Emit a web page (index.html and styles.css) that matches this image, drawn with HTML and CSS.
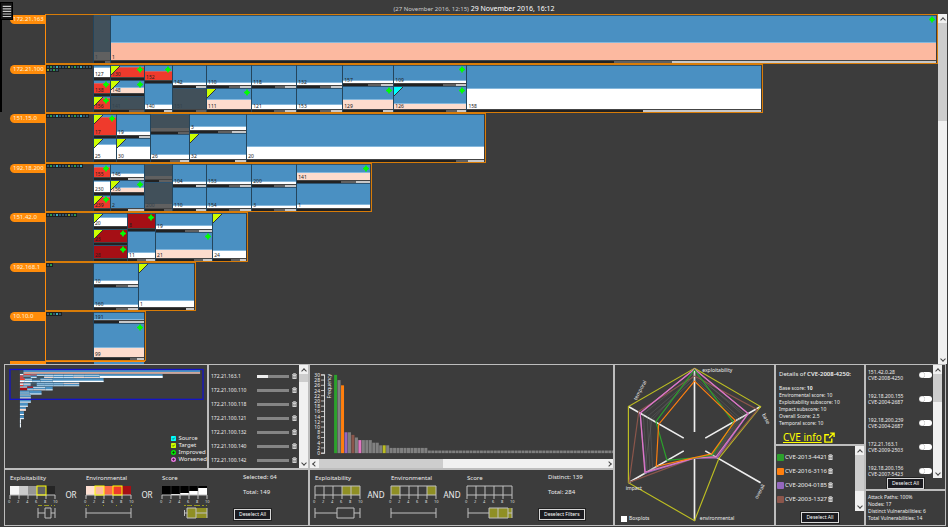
FILE: index.html
```html
<!DOCTYPE html>
<html lang="en">
<head>
<meta charset="utf-8">
<title>Vulnerability overview</title>
<link rel="stylesheet" href="styles.css">
</head>
<body>
<button class="menu" type="button" aria-label="Menu"><svg viewBox="0 0 13 18"><path d="M2 3.5h10M2 6.500h10M2 9.500h10M2 12.500h10M2 15.500h10" stroke="#ccc" stroke-width="1.300"/></svg></button>
<div class="drawer-edge"></div>
<header class="clock"><span class="since">(27 November 2016, 12:15)</span> 29 November 2016, 16:12</header>

<main class="map">
  <div class="subnets" id="subnets"></div>
  <div class="scroll scroll-v"><i class="up"></i><b class="thumb thumb-map"></b><i class="down"></i></div>
</main>

<section class="dock">
  <div class="col">
    <div class="split">
      <div class="panel overview">
        <svg id="overview" viewBox="-1 0 203 101"></svg>
        <ul class="legend">
          <li><svg viewBox="0 0 6 6"><rect width="6" height="6" rx="1" fill="#0ff"/><path d="M1.500 3l1 1 2-2" stroke="#244" fill="none"/></svg>Source</li>
          <li><svg viewBox="0 0 6 6"><rect width="6" height="6" rx="1" fill="#cf0"/><path d="M1.500 3l1 1 2-2" stroke="#440" fill="none"/></svg>Target</li>
          <li><svg viewBox="0 0 6 6"><circle cx="3" cy="3" r="3" fill="#0e0"/><path d="M1.500 3h3M3 1.500v3" stroke="#131"/></svg>Improved</li>
          <li><svg viewBox="0 0 6 6"><circle cx="3" cy="3" r="3" fill="#e377dd"/><path d="M1.500 3h3M3 1.500v3" stroke="#414"/></svg>Worsened</li>
        </ul>
      </div>
      <div class="panel hosts">
        <ul class="host-list" id="hosts"></ul>
        <div class="scroll scroll-v"><i class="up"></i><b class="thumb thumb-hosts"></b><i class="down"></i></div>
      </div>
    </div>
    <div class="panel filters">
      <figure><figcaption>Exploitability</figcaption>
        <svg viewBox="0 0 52 42">
          <g><rect x="3" width="9" height="9" y="2" fill="#f7f7f7"/><rect x="12" y="2" width="9" height="9" fill="#ccc"/><rect x="21" y="2" width="9" height="9" fill="#969696"/><rect x="30" y="2" width="9" height="9" fill="#636363"/><rect x="39" y="2" width="9" height="9" fill="#252525"/></g>
          <path class="axis" d="M3 11h45M3 11v4M12 11v4M21 11v4M30 11v4M39 11v4M48 11v4"/>
          <rect class="pick" x="30" y="2" width="9" height="9"/>
          <g class="tick"><text x="1" y="19">0</text><text x="10" y="19">2</text><text x="19" y="19">4</text><text x="28" y="19">6</text><text x="37" y="19">8</text><text x="46" y="19">10</text></g>
          <path class="dots" d="M31 21.500h4M37 21.500h5M44 21.500h1M47 21.500h1"/>
          <path class="axis" d="M31 24v10M31 29h7M44 29h4M48 24v10M38 24h6v10h-6z"/>
        </svg></figure>
      <span class="op">OR</span>
      <figure><figcaption>Environmental</figcaption>
        <svg viewBox="0 0 52 42">
          <g><rect x="3" y="2" width="9" height="9" fill="#fee0d2"/><rect x="12" y="2" width="9" height="9" fill="#fcbba1"/><rect x="21" y="2" width="9" height="9" fill="#fb6a4a"/><rect x="30" y="2" width="9" height="9" fill="#ef3b2c"/><rect x="39" y="2" width="9" height="9" fill="#a50f15"/></g>
          <path class="axis" d="M3 11h45M3 11v4M12 11v4M21 11v4M30 11v4M39 11v4M48 11v4"/>
          <rect class="pick" x="12" y="2" width="9" height="9"/><rect class="pick" x="30" y="2" width="9" height="9"/>
          <g class="tick"><text x="1" y="19">0</text><text x="10" y="19">2</text><text x="19" y="19">4</text><text x="28" y="19">6</text><text x="37" y="19">8</text><text x="46" y="19">10</text></g>
          <path class="dots" d="M3 21.500h1M5 21.500h1M20 21.500h1M33 21.500h1M48 21.500h1"/>
          <path class="axis" d="M3 24v10M3 29h45M48 24v10"/>
        </svg></figure>
      <span class="op">OR</span>
      <figure><figcaption>Score</figcaption>
        <svg viewBox="0 0 52 42">
          <rect x="3" y="2" width="45" height="9" fill="#000"/>
          <path fill="#fff" d="M12 11v-1h9v-1h9v-2h9v-3h9v7z"/>
          <path stroke="#555" stroke-width=".5" d="M12 2v9M21 2v9M30 2v9M39 2v9"/>
          <path class="axis" d="M3 11h45M3 11v4M12 11v4M21 11v4M30 11v4M39 11v4M48 11v4"/>
          <g class="tick"><text x="1" y="19">0</text><text x="10" y="19">2</text><text x="19" y="19">4</text><text x="28" y="19">6</text><text x="37" y="19">8</text><text x="46" y="19">10</text></g>
          <path class="dots" d="M25 21.500h2M28 21.500h5M35 21.500h6M43 21.500h2M47 21.500h1"/>
          <rect x="28" y="24" width="20" height="10" fill="#8f8f24"/>
          <path class="axis" d="M25.500 26v6M25.500 29h3M28 24h9v10h-9zM37 29h11M48 24v10"/>
        </svg></figure>
      <div class="summary"><p>Selected: 64</p><p>Total: 149</p><button class="btn" type="button">Deselect All</button></div>
    </div>
  </div>

  <div class="col">
    <div class="panel histogram">
      <svg id="histogram" viewBox="0 0 302 93"></svg>
      <div class="scroll scroll-h"><i class="left"></i><b class="thumb thumb-hist"></b><i class="right"></i></div>
    </div>
    <div class="panel filters">
      <figure><figcaption>Exploitability</figcaption>
        <svg viewBox="0 0 52 42">
          <rect x="30" y="2" width="18" height="9" fill="#8f8f24"/>
          <path class="axis" d="M3 2h45v9h-45zM3 11v4M12 2v13M21 2v13M30 2v13M39 2v13M48 11v4"/>
          <g class="tick"><text x="1" y="19">0</text><text x="10" y="19">2</text><text x="19" y="19">4</text><text x="28" y="19">6</text><text x="37" y="19">8</text><text x="46" y="19">10</text></g>
          <path class="axis" d="M3 24v10M3 29h22M42 29h6M48 24v10M25 24h17v10h-17z"/>
        </svg></figure>
      <span class="op">AND</span>
      <figure><figcaption>Environmental</figcaption>
        <svg viewBox="0 0 52 42">
          <path fill="#8f8f24" d="M3 2h9v9h-9zM39 2h9v9h-9z"/>
          <path class="axis" d="M3 2h45v9h-45zM3 11v4M12 2v13M21 2v13M30 2v13M39 2v13M48 11v4"/>
          <g class="tick"><text x="1" y="19">0</text><text x="10" y="19">2</text><text x="19" y="19">4</text><text x="28" y="19">6</text><text x="37" y="19">8</text><text x="46" y="19">10</text></g>
          <path class="axis" d="M3 24v10M3 29h45M48 24v10"/>
        </svg></figure>
      <span class="op">AND</span>
      <figure><figcaption>Score</figcaption>
        <svg viewBox="0 0 52 42">
          <path class="axis" d="M3 2h45v9h-45zM3 11v4M12 2v13M21 2v13M30 2v13M39 2v13M48 11v4"/>
          <g class="tick"><text x="1" y="19">0</text><text x="10" y="19">2</text><text x="19" y="19">4</text><text x="28" y="19">6</text><text x="37" y="19">8</text><text x="46" y="19">10</text></g>
          <rect x="25" y="24" width="23" height="10" fill="#8f8f24"/>
          <path class="axis" d="M4 24v10M4 29h21M25 24h19v10h-19zM34 24v10M44 29h4M48 24v10"/>
        </svg></figure>
      <div class="summary"><p>Distinct: 139</p><p>Total: 284</p><button class="btn" type="button">Deselect Filters</button></div>
    </div>
  </div>

  <div class="panel radar">
    <svg viewBox="12 12 474 474">
      <g fill="none">
        <g stroke="#eee" stroke-width="5"><path d="M249 22V212M446 136L281 230M446 363L281 268M249 476V287M52 363L217 268M52 136L217 230"/></g>
        <g stroke="#777" stroke-width="1.500" opacity=".7">
          <path d="M249 36L395 162L308 284L249 289L108 328L96 158Z"/><path d="M249 46L384 170L306 284L249 289L116 324L108 166Z"/>
          <path d="M249 54L378 174L304 282L249 289L124 320L116 172Z"/><path d="M249 40L402 160L310 285L249 289L98 336L122 176Z"/>
        </g>
        <g stroke-width="3.500">
          <path stroke="#bcbd22" d="M249 22L446 136L322 290L249 476L52 363L52 136Z"/>
          <path stroke="#8c564b" d="M249 45L437 145L318 288L249 289L54 362L83 150Z"/>
          <path stroke="#9467bd" d="M249 25L409 157L316 289L249 290L103 334L87 155Z"/>
          <path stroke="#e377c2" d="M249 24L409 157L313 286L249 289L101 332L87 155Z"/>
          <path stroke="#2ca02c" d="M249 26L365 183L303 280L249 289L167 296L134 181Z"/>
          <path stroke="#ff7f0e" d="M249 60L371 178L300 277L249 288L135 314L142 189Z"/>
        </g>
      </g>
      <g class="radar-text">
        <text x="272" y="32">exploitability</text>
        <text transform="translate(76 118) rotate(-62)">temporal</text>
        <text transform="translate(450 160) rotate(62)">base</text>
        <text transform="translate(437 412) rotate(-62)">overall</text>
        <text x="44" y="384">impact</text>
        <text x="265" y="475">environmental</text>
      </g>
    </svg>
    <label class="boxplots"><input type="checkbox">Boxplots</label>
  </div>

  <div class="col detail-col">
    <div class="panel details">
      <h2>Details of <strong>CVE-2008-4250:</strong></h2>
      <p>Base score: <strong>10</strong></p>
      <p>Enviromental score: 10</p>
      <p>Exploitability subscore: 10</p>
      <p>Impact subscore: 10</p>
      <p>Overall Score: 2.5</p>
      <p>Temporal score: 10</p>
      <a class="info" href="#cve">CVE info <svg viewBox="0 0 12 12"><path d="M8.500 7v4h-7.500v-8h4.500M6.800 1.200h4.200v4.200M11 1L5.500 6.600" fill="none" stroke="#ff0" stroke-width="1.500"/></svg></a>
    </div>
    <div class="panel cves">
      <div class="cve-scroll"><ul class="cve-list" id="cves"></ul>
      <div class="scroll scroll-v"><i class="up"></i><b class="thumb thumb-cves"></b><i class="down"></i></div></div>
      <button class="btn" type="button">Deselect All</button>
    </div>
  </div>

  <div class="col path-col">
    <div class="panel paths">
      <div class="path-scroll"><ul class="path-list" id="paths"></ul>
      <div class="scroll scroll-v"><i class="up"></i><b class="thumb thumb-paths"></b><i class="down"></i></div></div>
      <button class="btn" type="button">Deselect All</button>
    </div>
    <div class="panel stats"><p>Attack Paths: 100%</p><p>Nodes: 17</p><p>Distinct Vulnerabilities: 6</p><p>Total Vulnerabilities: 14</p></div>
  </div>
</section>
<script src="app.js"></script>
</body>
</html>
```
FILE: styles.css
```css
* { box-sizing: border-box; }
html, body { height: 100%; }
body {
  margin: 0;
  background: #3c3c3c;
  color: #eee;
  font: 5px/7px "Noto Sans", "Open Sans", sans-serif;
  display: grid;
  grid-template-rows: 14px minmax(0, 1fr) 163px;
  overflow: hidden;
}
ul, p, h2, figure { margin: 0; padding: 0; list-style: none; }
svg { display: block; }

.menu { position: absolute; left: 0; top: 2px; width: 13px; height: 18px; padding: 0; border: 1px solid #000; background: #151515; z-index: 2; }
.menu svg { width: 11px; height: 16px; }
.drawer-edge { position: absolute; left: 0; top: 20px; width: 2px; height: 92px; background: #000; }
.clock { text-align: center; font-size: 7px; line-height: 17px; color: #fff; }
.since { font-size: 6px; color: #ccc; }

/* subnet map */
.map { display: flex; min-height: 0; }
.subnets { flex: 1; min-width: 0; display: grid; grid-template-rows: repeat(7, minmax(0, 1fr)) 3px; overflow: hidden; }
.subnet { display: flex; min-height: 0; min-width: 0; }
.tag { flex: 0 0 45px; padding-left: 10px; }
.tag span { display: block; margin-top: 1px; padding-left: 3px; height: 9px; font-size: 6px; line-height: 9px; border-radius: 5px 0 0 5px; background: #ff8c0a; color: #fff0d8; }
.track { flex: 1; min-width: 0; display: flex; }
.frame { display: flex; min-width: 0; border: 1px solid #d87c08; border-left-color: #ff8c0a; padding-right: 1px; }
.dots-box { flex: 0 0 47px; display: flex; flex-wrap: wrap; align-content: flex-start; gap: 1px; padding: 1px 0 0 1px; }
.dot { width: 2px; height: 2px; background: #36586c; outline: 1px solid #1c2022; }
.dot.y { background: #8a9a2a; }
.dot.g { background: #2c9a4a; }
.dot.c { background: #3aa8b8; }
.cells { flex: 1; display: flex; min-width: 0; }
.stack { display: flex; flex-direction: column; min-width: 0; border-left: 1px solid #24455c; }
.cell { display: flex; flex-direction: column; min-height: 0; border-top: 1px solid #2d5370; }
.face { flex: 1; min-height: 0; position: relative; display: flex; align-items: flex-end; background: #4a90c2; }
.level { width: 100%; border-top: 1px solid #86b8dc; }
.white { background: #fff; }
.pink { background: #fddccd; }
.salmon { background: #fcb9a0; }
.red { background: #ef3a2c; border-top-color: #d06060; }
.crimson { background: #a50f15; border-top-color: #a50f15; }
.off .face { background: #41505a; }
.off .level { background: #606060; border-top-color: #606060; }
.name { position: absolute; left: 1px; bottom: 0; line-height: 5px; color: #222; }
.off .name { color: #34424c; }
.corner { position: absolute; left: 0; top: 0; width: 9px; height: 9px; }
.plus { position: absolute; right: 1px; top: 0; width: 6px; height: 7px; }
.strip { flex: 0 0 3px; display: flex; justify-content: flex-end; background: #222; border-top: 1px solid #444; }
.mid { background: #606060; }
.light { background: #c8c8c8; }
.rest { border-top: 1px solid #ff8c0a; margin-left: 10px; display: flex; width: 135px; }
.rest i { height: 2px; }
.rest .o { width: 36px; background: #ff8c0a; }
.rest .b { margin-left: 48px; width: 50px; background: #4a90c2; }

/* scrollbars */
.scroll { background: #f0f0f0; display: flex; align-items: center; justify-content: flex-start; }
.scroll-v { flex: 0 0 9px; flex-direction: column; }
.dock .scroll-v { flex-basis: 8px; }
.scroll-h { height: 9px; }
.scroll i { flex: 0 0 9px; width: 9px; height: 9px; display: grid; place-items: center; }
.scroll i::before { content: ""; width: 3px; height: 3px; border: solid #444; border-width: 1px 0 0 1px; }
.up::before { transform: translateY(1px) rotate(45deg); }
.down::before { transform: translateY(-1px) rotate(225deg); }
.left::before { transform: rotate(-45deg); }
.right::before { transform: rotate(135deg); }
.down, .right { margin: auto 0 0; }
.scroll-h .right { margin: 0 0 0 auto; }
.thumb { background: #cdcdcd; width: 100%; }
.thumb-map { height: 28%; }
.thumb-hosts { height: 8px; }
.thumb-cves { height: 36px; }
.thumb-paths { height: 28px; }
.scroll-h .thumb { width: 41%; height: 100%; }
.map > .scroll { margin-right: 1px; }

/* dock */
.dock { margin: 0 2px 1px 4px; display: grid; grid-template-columns: 305fr 305fr 161fr 90fr 81fr; min-height: 0; }
.col { display: grid; grid-template-rows: 105px minmax(0, 1fr); min-height: 0; min-width: 0; }
.detail-col { grid-template-rows: 81px minmax(0, 1fr); }
.path-col { grid-template-rows: 126px minmax(0, 1fr); }
.split { display: grid; grid-template-columns: 204fr 101fr; min-height: 0; }
.panel { border: 1px solid #bdbdbd; min-height: 0; min-width: 0; overflow: hidden; position: relative; }

.overview svg { width: 100%; }
.legend { position: absolute; right: 0; bottom: 5px; }
.legend li { display: flex; align-items: center; gap: 2px; font-size: 6px; line-height: 7px; }
.legend svg { width: 5px; height: 5px; }

.hosts { display: flex; }
.host-list { flex: 1; padding-top: 4px; }
.host-list li { display: grid; grid-template-columns: 43px 1fr 5px; column-gap: 3px; align-items: center; height: 14px; margin-right: 2px; padding-left: 2px; }
.meter { height: 3px; background: #858585; }
.meter b { display: block; height: 100%; background: #eee; }
.bin { width: 5px; height: 6px; }

.filters { display: flex; align-items: flex-start; padding: 4px 2px 0; }
.filters figure { flex: 0 0 52px; }
.filters figcaption { padding-left: 3px; font-size: 6px; line-height: 8px; margin-bottom: 2px; }
.filters figure svg { width: 52px; height: 42px; }
.axis { stroke: #c0c0c0; stroke-width: 1; fill: none; }
.pick { stroke: #ff0; stroke-width: 1; fill: none; }
.dots { stroke: #9a9a20; stroke-width: 1; }
.tick text { font-size: 4px; fill: #ddd; }
.op { flex: 0 0 24px; text-align: center; font-size: 8px; line-height: 10px; padding-top: 16px; }
.summary { margin-left: 23px; display: grid; gap: 8px; justify-items: start; font-size: 6px; }
.summary p { padding-left: 9px; }
.summary .btn { margin-top: 5px; }
.btn { font: 5px/9px "Noto Sans", "Open Sans", sans-serif; color: #fff; background: #1b1b20; border: 1px solid #d8d8d8; outline: 1px solid #222; padding: 0 4px; }

.histogram { display: flex; flex-direction: column; }
.histogram > svg { width: 100%; flex: 1; min-height: 0; }
.histogram text { fill: #eee; font-size: 5px; }

.radar svg { width: 100%; }
.radar-text text { font-size: 15px; fill: #eee; }
.boxplots { position: absolute; left: 6px; bottom: 3px; display: flex; align-items: center; gap: 2px; }
.boxplots input { appearance: none; width: 6px; height: 6px; margin: 0; background: #fff; }

.details { padding: 5px 0 0 3px; }
.details h2 { font-size: 6px; font-weight: 400; line-height: 8px; margin-bottom: 7px; }
.details h2 strong { font-weight: 600; }
.details p { line-height: 7px; }
.info { display: flex; gap: 2px; align-items: center; margin: 3px 0 0 4px; font-size: 10px; line-height: 14px; color: #ff0; text-underline-offset: 1px; }
.info svg { width: 11px; height: 11px; }

.cves, .paths { display: flex; flex-direction: column; align-items: center; }
.cve-scroll, .path-scroll { flex: 1; min-height: 0; align-self: stretch; display: flex; overflow: hidden; }
.cve-list, .path-list { flex: 1; min-width: 0; overflow: hidden; }
.cve-list { padding: 4px 0 0 1px; }
.cve-list li { display: flex; align-items: center; gap: 1px; height: 14px; font-size: 6px; }
.cve-list i { width: 7px; height: 7px; border-radius: 1px; }
.cves .btn { margin: 1px 0 2px; }
.paths .btn { margin: 0; }
.path-list { padding: 4px 1px 0 2px; }
.path-list li { height: 24px; line-height: 6px; }
.path-list label { display: flex; justify-content: space-between; white-space: nowrap; }
.path-list input { appearance: none; flex: 0 0 13px; height: 6px; margin: 3px 0 0; border-radius: 3px; background: radial-gradient(circle at 3px 3px, #fff 2px, #ccc 3px, #fff 3px); }
.paths .scroll { margin-right: 3px; }
.stats { padding: 3px 0 0 2px; }
```
FILE: app.js
```js
// Cell: [name, height, level, kind, flags, mid %, light %]; flags: t target, s source, p improved.
const W = 'white', P = 'pink', S = 'salmon', R = 'red', C = 'crimson', O = 'off';
const rows = [
  { ip: '172.21.163', dots: 0, cols: [
    [17, ['1', 48, 8, O, '', 30, 0]],
    [825, ['1', 48, 18, S, 'p', 7, 32]]] },
  { ip: '172.21.100', dots: 19, cols: [
    [17, ['127', 16, 12, W, '', 0, 0], ['138', 16, 11, R, 'p', 0, 0], ['156', 16, 12, R, 'tp', 0, 0]],
    [34, ['130', 16, 12, R, 'tp', 0, 0], ['148', 16, 7, P, 'tp', 0, 0], ['141', 16, 0, O, '', 45, 0]],
    [28, ['152', 19, 10, R, 'p', 0, 0], ['140', 29, 5, W, '', 0, 30]],
    [34, ['142', 24, 4, W, '', 0, 32], ['151', 24, 0, O, '', 30, 0]],
    [45, ['110', 24, 4, W, '', 26, 25], ['111', 24, 11, P, 'tp', 0, 0]],
    [45, ['118', 24, 4, W, '', 24, 25], ['121', 24, 5, W, '', 25, 25]],
    [46, ['132', 24, 4, W, '', 25, 25], ['153', 24, 5, W, '', 25, 25]],
    [51, ['157', 22, 4, W, '', 26, 24], ['129', 26, 11, P, 'p', 0, 20]],
    [73, ['109', 22, 4, W, 'p', 18, 15], ['126', 26, 7, P, 'sp', 15, 13]],
    [294, ['158', 48, 22, W, '', 0, 40]]] },
  { ip: '151.15.0', dots: 14, cols: [
    [23, ['17', 24, 19, R, 'tp', 0, 0], ['25', 24, 16, W, 't', 0, 0]],
    [34, ['19', 24, 4, W, '', 0, 32], ['30', 24, 13, W, 't', 0, 0]],
    [39, ['', 20, 3, O, '', 30, 0], ['26', 28, 5, W, '', 25, 24]],
    [57, ['3', 19, 4, W, '', 25, 25], ['32', 29, 5, W, 't', 0, 20]],
    [238, ['20', 48, 13, W, '', 5, 7]]] },
  { ip: '192.18.200', dots: 12, cols: [
    [17, ['155', 16, 10, R, 'p', 0, 0], ['230', 16, 13, W, '', 0, 0], ['239', 16, 12, R, 'tp', 0, 0]],
    [34, ['146', 16, 4, W, '', 0, 50], ['156', 16, 6, P, 'tp', 0, 0], ['2', 16, 0, W, '', 0, 50]],
    [28, ['', 18, 3, O, '', 50, 0], ['200', 30, 4, O, '', 30, 0]],
    [34, ['104', 24, 4, W, '', 0, 30], ['110', 24, 4, W, '', 0, 30]],
    [45, ['153', 24, 4, W, '', 25, 25], ['154', 24, 4, W, '', 25, 25]],
    [45, ['200', 24, 4, W, '', 25, 25], ['3', 24, 4, W, '', 25, 25]],
    [74, ['141', 19, 8, P, 'p', 20, 20], ['1', 29, 5, W, '', 0, 0]]] },
  { ip: '151.42.0', dots: 10, cols: [
    [34, ['20', 16, 10, W, 't', 0, 0], ['23', 16, 13, C, 'tp', 0, 0], ['28', 16, 13, C, 'p', 0, 0]],
    [28, ['8', 18, 15, C, 'p', 0, 0], ['11', 30, 6, W, '', 35, 32]],
    [57, ['19', 19, 4, W, '', 25, 24], ['21', 29, 9, P, 'p', 16, 16]],
    [34, ['24', 48, 8, W, 't', 25, 20]]] },
  { ip: '192.168.1', dots: 2, cols: [
    [45, ['10', 24, 4, W, '', 25, 24], ['160', 24, 4, W, '', 25, 24]],
    [56, ['1', 48, 8, W, 't', 0, 14]]] },
  { ip: '10.10.0', dots: 5, cols: [
    [51, ['191', 11, 2, W, '', 0, 50], ['99', 37, 11, P, 'p', 14, 14]]] }
];
const FULL = 842, GUTTER = 50;
const corner = c => `<svg class="corner" viewBox="0 0 9 9"><path d="M0 0H9L0 9Z" fill="${c}"/><path d="M9 0L0 9" stroke="#333"/></svg>`;
const plus = '<svg class="plus" viewBox="0 0 6 7"><path d="M3 .500L4 2.300L6 3.500L4 4.700L3 6.500L2 4.700L0 3.500L2 2.300Z" fill="#0f0" stroke="#0f0" stroke-width=".8"/></svg>';

function cell([name, h, level, kind, flags, mid, light]) {
  return `<div class="cell ${kind === O ? 'off' : ''}" style="height:${h / 48 * 100}%"><div class="face">` +
    (level ? `<div class="level ${kind}" style="height:${Math.round(level / (h - 3) * 100)}%"></div>` : '') +
    `<span class="name">${name}</span>` +
    (flags.includes('t') ? corner('#cf0') : '') + (flags.includes('s') ? corner('#0ff') : '') +
    (flags.includes('p') ? plus : '') +
    `</div><div class="strip"><i class="mid" style="width:${mid}%"></i><i class="light" style="width:${light}%"></i></div></div>`;
}
const total = r => r.cols.reduce((s, c) => s + c[0], 0);
document.getElementById('subnets').innerHTML = rows.map(r => {
  const sum = total(r);
  const w = (sum + GUTTER) / (FULL + GUTTER) * 100;
  const dots = Array.from({ length: r.dots }, (_, i) => `<i class="dot ${['', '', '', 'y', '', 'g', '', 'c'][i * 5 % 8]}"></i>`).join('');
  return `<div class="subnet"><div class="tag"><span>${r.ip}</span></div><div class="track"><div class="frame" style="width:${w}%">` +
    `<div class="dots-box">${dots}</div><div class="cells">` +
    r.cols.map(c => `<div class="stack" style="width:${c[0] / sum * 100}%">${c.slice(1).map(cell).join('')}</div>`).join('') +
    '</div></div></div></div>';
}).join('') + '<div class="rest"><i class="o"></i><i class="b"></i></div>';

// Miniature of the whole map with the visible window outlined
const fills = { white: '#fff', pink: '#fddccd', salmon: '#d9a796', red: '#ef3a2c', crimson: '#a50f15', off: '#41505a' };
let mini = '';
const rect = (x, y, w, h, f) => `<rect x="${x}" y="${y}" width="${w}" height="${h}" fill="${f}"/>`;
rows.forEach((r, i) => {
  let x = 14;
  r.cols.forEach(([w, ...cells]) => {
    let y = 5 + i * 4.15;
    cells.forEach(c => {
      const h = c[1] / 12.5, l = c[3] === O ? h : c[2] / 12.5 + .3;
      mini += rect(x, y, w * .215, h, '#4a90c2') + rect(x, y + h - l, w * .215, l, fills[c[3]]);
      y += h;
    });
    x += w * .215;
  });
});
[[11, 1], [8, 1], [6, 2], [4, 1], [4, 1], [1, 4], [1, 4]].forEach(([w, l], i) => {
  const y = 34 + i * 4.15;
  mini += rect(14, y, w, 3.8, '#4a90c2') + rect(14, y + 3.8 - l, w, l, i === 2 ? '#fddccd' : '#fff');
});
document.getElementById('overview').innerHTML = mini + '<rect x="4" y="4.5" width="194" height="30" fill="none" stroke="#1414c8" stroke-width="1.3"/>';

// Frequency histogram
const counts = [30, 28, 26, 8, 8, 7, 6, 5, 5, 5, 5, 4, 4, 3, 3, 3, ...Array(11).fill(2), ...Array(54).fill(1)];
const tint = { 0: '#2ca02c', 2: '#ff7f0e', 3: '#9467bd', 5: '#8c564b', 7: '#e377c2', 14: '#bcbd22' };
let hist = '<path d="M11 9.500H14.500V87.500H11" fill="none" stroke="#ddd"/><text transform="translate(21 33) rotate(-90)">Frequency</text>';
for (let v = 0; v <= 30; v += 2) {
  const y = 87.5 - v * 2.6;
  hist += `<path d="M11 ${y}H14.500" stroke="#ddd" stroke-width=".8"/><text x="10" y="${y + 2}" text-anchor="end">${v}</text>`;
}
counts.forEach((n, i) => { hist += rect(24 + i * 3.46, 87.5 - n * 2.6, 3, n * 2.6, tint[i] || '#808080'); });
document.getElementById('histogram').innerHTML = hist;

const bin = '<svg class="bin" viewBox="0 0 5 6"><path d="M0 1.500h5M1.500 1V.500h2V1" fill="none" stroke="#ddd" stroke-width=".7"/><path d="M.5 2h4v4h-4z" fill="#ddd"/><path d="M1.800 2.800v2.400M3.200 2.800v2.400" stroke="#444" stroke-width=".6"/></svg>';
document.getElementById('hosts').innerHTML = ['163.1', '100.110', '100.118', '100.121', '100.132', '100.140', '100.142'].map((h, i) =>
  `<li><span>172.21.${h}</span><span class="meter"><b style="width:${i ? 0 : 33}%"></b></span>${bin}</li>`).join('');
document.getElementById('cves').innerHTML = [['2013-4421', '#2ca02c'], ['2016-3116', '#ff7f0e'], ['2004-0185', '#9467bd'], ['2003-1327', '#8c564b']].map(([n, c]) =>
  `<li><i style="background:${c}"></i><span>CVE-${n}</span>${bin}</li>`).join('');
document.getElementById('paths').innerHTML = [['151.42.0.28', '2008-4250'], ['192.18.200.155', '2004-2687'], ['192.18.200.239', '2004-2687'], ['172.21.163.1', '2009-2503'], ['192.18.200.156', '2007-5423']].map(([a, b]) =>
  `<li><label><span>${a}<br>CVE-${b}</span><input type="checkbox"></label></li>`).join('');
```
